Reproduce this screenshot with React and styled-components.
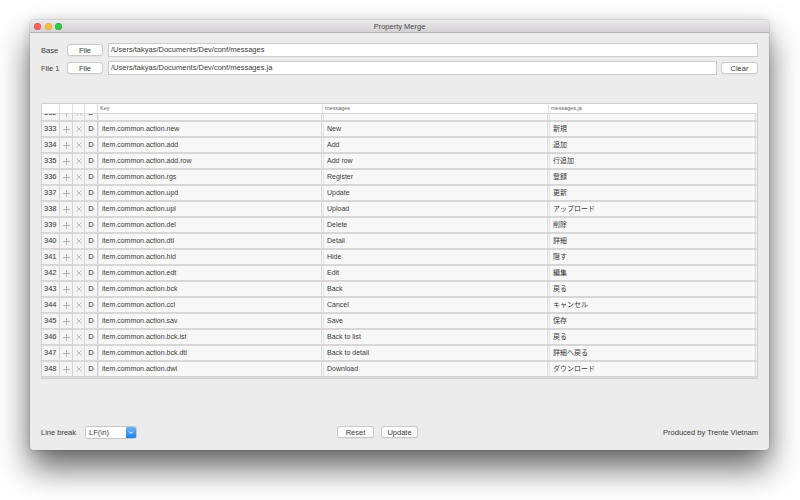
import styled, { createGlobalStyle } from "styled-components";

const GlobalStyle = createGlobalStyle`
  html, body {
    margin: 0;
    padding: 0;
    background: #ffffff;
  }
  body {
    min-height: 100vh;
    font-family: "Liberation Sans", Arial, "Noto Sans CJK JP", sans-serif;
    color: #3a3a3a;
  }
`;

const Desktop = styled.div`
  padding: 20px 0 50px 30px;
`;

const Window = styled.div`
  width: 739px;
  height: 430px;
  background: #ececec;
  border-radius: 4px;
  box-shadow: 0 18px 32px rgba(0, 0, 0, 0.6), 0 0 10px rgba(0, 0, 0, 0.12),
    0 0 0 1px rgba(0, 0, 0, 0.07);
  display: flex;
  flex-direction: column;
  overflow: hidden;
`;

const TitleBar = styled.div`
  height: 12px;
  flex: none;
  position: relative;
  display: flex;
  align-items: center;
  justify-content: center;
  background: linear-gradient(#ebe9eb, #d4d2d4);
  border-bottom: 1px solid #b8b6b8;
  font-size: 7.5px;
  color: #4a4a4a;
`;

const Lights = styled.div`
  position: absolute;
  left: 4px;
  top: 3px;
  display: flex;
  gap: 3.5px;
`;

const Light = styled.span`
  width: 7px;
  height: 7px;
  border-radius: 50%;
  background: ${p => p.color};
  box-shadow: inset 0 0 0 0.5px rgba(0, 0, 0, 0.18);
`;

const Content = styled.div`
  flex: 1;
  display: flex;
  flex-direction: column;
  padding: 10px 11px 11px 11px;
`;

const PathRow = styled.div`
  display: flex;
  align-items: center;
  height: 14px;
  margin-bottom: ${p => (p.last ? "0" : "4px")};
`;

const Label = styled.span`
  width: 26px;
  font-size: 7.5px;
  color: #3a3a3a;
`;

const Button = styled.button`
  width: ${p => p.w || 36}px;
  height: 12px;
  padding: 0;
  border: 1px solid #cacaca;
  border-radius: 3px;
  background: #fefefe;
  box-shadow: 0 0.5px 0 rgba(0, 0, 0, 0.08);
  font-family: inherit;
  font-size: 7.5px;
  color: #3a3a3a;
  margin-left: ${p => p.ml || 0}px;
  margin-right: ${p => p.mr || 0}px;
`;

const PathInput = styled.div`
  flex: 1;
  height: 14px;
  box-sizing: border-box;
  border: 1px solid #cbcbcb;
  background: #fff;
  font-size: 7.5px;
  line-height: 12px;
  padding-left: 2px;
  color: #3a3a3a;
`;

const Table = styled.div`
  margin-top: 28px;
  border: 1px solid #d0d0d0;
  background: #d8d8d8;
`;

const cols = "18px 13px 12px 13px 225px 226px 1fr";

const Header = styled.div`
  position: relative;
  z-index: 1;
  display: grid;
  grid-template-columns: ${cols};
  height: 9px;
  background: #fff;
  border-bottom: 1px solid #d6d6d6;
`;

const HeadCell = styled.div`
  font-size: 5.5px;
  color: #666;
  padding: 1px 0 0 2px;
  border-right: 1px solid #e2e2e2;
  &:last-child {
    border-right: none;
  }
`;

const Body = styled.div`
  height: 264px;
  overflow: hidden;
`;

const Scroll = styled.div`
  margin-top: -8px;
`;

const Row = styled.div`
  display: grid;
  grid-template-columns: ${cols};
  height: 14px;
  background: #f4f4f4;
  border-bottom: 2px solid #d7d7d7;
  font-size: 7px;
  line-height: 14px;
`;

const NumCell = styled.div`
  padding-left: 2px;
  border-right: 1px solid #d4d4d4;
  color: #333;
  font-size: 7.5px;
`;

const IconCell = styled.div`
  display: flex;
  align-items: center;
  justify-content: center;
  border-right: 1px solid #d4d4d4;
  color: #333;
  font-size: 7.5px;
`;

const TextCell = styled.div`
  margin-right: 1px;
  padding-left: 3px;
  background: #f8f8f8;
  border-right: 1px solid #dcdcdc;
  border-left: 1px solid #e4e4e4;
  white-space: nowrap;
  overflow: hidden;
  color: #3a3a3a;
`;

const Footer = styled.div`
  margin-top: auto;
  display: flex;
  align-items: center;
  height: 14px;
`;

const FooterLabel = styled.span`
  width: 44px;
  font-size: 7.5px;
  color: #3a3a3a;
`;

const Select = styled.div`
  display: flex;
  width: 52px;
  height: 13px;
  box-sizing: border-box;
  border: 1px solid #c6c6c6;
  border-radius: 2.5px;
  background: #fff;
  overflow: hidden;
`;

const SelectText = styled.span`
  flex: 1;
  font-size: 7.5px;
  line-height: 11px;
  padding-left: 3px;
  color: #3a3a3a;
`;

const SelectArrow = styled.span`
  width: 10px;
  display: flex;
  align-items: center;
  justify-content: center;
  background: linear-gradient(#6db4fb, #1f7df3);
`;

const Buttons = styled.div`
  display: flex;
  margin-left: 200px;
`;

const Credit = styled.span`
  margin-left: auto;
  font-size: 7.5px;
  color: #3a3a3a;
`;

const Plus = () => (
  <svg width="7" height="7" viewBox="0 0 7 7">
    <path d="M3.5 0v7M0 3.5h7" stroke="#a8a8a8" strokeWidth="0.8" />
  </svg>
);

const Cross = () => (
  <svg width="6" height="6" viewBox="0 0 6 6">
    <path d="M0.5 0.5l5 5M5.5 0.5l-5 5" stroke="#a8a8a8" strokeWidth="0.8" />
  </svg>
);

const Chevron = () => (
  <svg width="6" height="9" viewBox="0 0 6 9">
    <path d="M1 3.5l2 2 2-2" stroke="#fff" strokeWidth="1" fill="none" />
  </svg>
);

const rows = [
  [332, "=====================", "", ""],
  [333, "item.common.action.new", "New", "新規"],
  [334, "item.common.action.add", "Add", "追加"],
  [335, "item.common.action.add.row", "Add row", "行追加"],
  [336, "item.common.action.rgs", "Register", "登録"],
  [337, "item.common.action.upd", "Update", "更新"],
  [338, "item.common.action.upl", "Upload", "アップロード"],
  [339, "item.common.action.del", "Delete", "削除"],
  [340, "item.common.action.dtl", "Detail", "詳細"],
  [341, "item.common.action.hid", "Hide", "隠す"],
  [342, "item.common.action.edt", "Edit", "編集"],
  [343, "item.common.action.bck", "Back", "戻る"],
  [344, "item.common.action.ccl", "Cancel", "キャンセル"],
  [345, "item.common.action.sav", "Save", "保存"],
  [346, "item.common.action.bck.lst", "Back to list", "戻る"],
  [347, "item.common.action.bck.dtl", "Back to detail", "詳細へ戻る"],
  [348, "item.common.action.dwl", "Download", "ダウンロード"],
];

const App = () => {
  return (
    <Desktop>
      <GlobalStyle />
      <Window>
        <TitleBar>
          <Lights>
            <Light color="#fc605c" />
            <Light color="#fdbc40" />
            <Light color="#34c84a" />
          </Lights>
          Property Merge
        </TitleBar>
        <Content>
          <PathRow>
            <Label>Base</Label>
            <Button mr={5}>File</Button>
            <PathInput>/Users/takyas/Documents/Dev/conf/messages</PathInput>
          </PathRow>
          <PathRow last>
            <Label>File 1</Label>
            <Button mr={5}>File</Button>
            <PathInput>/Users/takyas/Documents/Dev/conf/messages.ja</PathInput>
            <Button w={37} ml={4}>Clear</Button>
          </PathRow>

          <Table>
            <Header>
              <HeadCell />
              <HeadCell />
              <HeadCell />
              <HeadCell />
              <HeadCell>Key</HeadCell>
              <HeadCell>messages</HeadCell>
              <HeadCell>messages.ja</HeadCell>
            </Header>
            <Body>
              <Scroll>
                {rows.map(([num, key, msg, ja]) => (
                  <Row key={num}>
                    <NumCell>{num}</NumCell>
                    <IconCell><Plus /></IconCell>
                    <IconCell><Cross /></IconCell>
                    <IconCell>D</IconCell>
                    <TextCell>{key}</TextCell>
                    <TextCell>{msg}</TextCell>
                    <TextCell>{ja}</TextCell>
                  </Row>
                ))}
              </Scroll>
            </Body>
          </Table>

          <Footer>
            <FooterLabel>Line break</FooterLabel>
            <Select>
              <SelectText>LF(\n)</SelectText>
              <SelectArrow><Chevron /></SelectArrow>
            </Select>
            <Buttons>
              <Button w={37} mr={7}>Reset</Button>
              <Button w={37}>Update</Button>
            </Buttons>
            <Credit>Produced by Trente Vietnam</Credit>
          </Footer>
        </Content>
      </Window>
    </Desktop>
  );
};

export default App;
